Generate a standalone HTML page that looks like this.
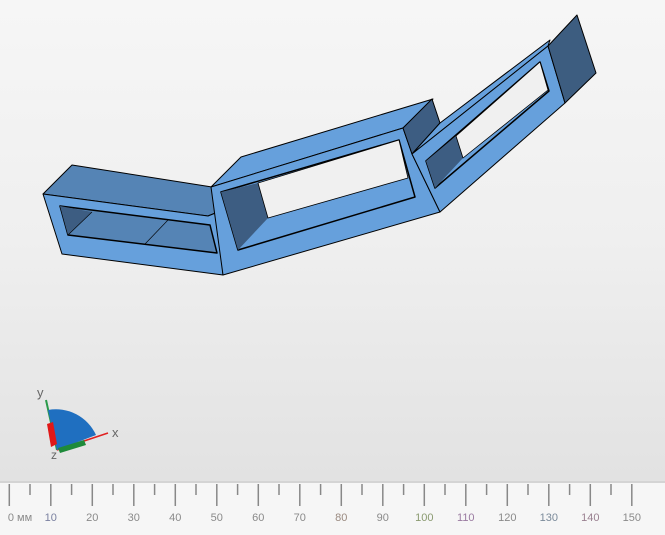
<!DOCTYPE html>
<html><head><style>
html,body{margin:0;padding:0;width:665px;height:533px;overflow:hidden;font-family:"Liberation Sans",sans-serif;}
#v{position:absolute;left:0;top:0;width:665px;height:481px;background:linear-gradient(#f6f6f6 0%,#efefef 50%,#e2e2e2 100%);}
#r{position:absolute;left:0;top:481px;width:665px;height:52px;background:#f6f6f6;border-top:2px solid #d4d4d4;}
</style></head><body>
<div id="v"></div>
<div id="r"></div>
<svg width="665" height="533" style="position:absolute;left:0;top:0" stroke-linejoin="round">
<g stroke="#000" stroke-width="1">
<!-- segment 1 -->
<polygon points="43,194 72,165 212,187 218,212 208,216" fill="#5584b5"/>
<polygon points="43,194 208,216 218,212 223,275 62,254" fill="#66a0dc"/>
<polygon points="60,206 210,225 217,253 68,235" fill="#5584b5" stroke-width="1.5"/>
<polygon points="60,206 92,212 68,235" fill="#3d5d82" stroke="none"/>
<line x1="92" y1="212" x2="68" y2="235" stroke-width="0.6"/>
<line x1="168" y1="220" x2="145" y2="244" stroke-width="0.6"/>
<!-- segment 2 -->
<polygon points="211,187 241,157 433,99 403,128" fill="#66a0dc"/>
<polygon points="211,187 403,128 412,154 440,212 223,275" fill="#66a0dc"/>
<polygon points="221,192 399,140 415,197 238,250" fill="#66a0dc" stroke-width="1.5"/>
<polygon points="221,192 258,183 268,218 238,250" fill="#3d5d82" stroke="none"/>
<polygon points="258,183 399,140 408,178 268,218" fill="#f0f0f0" stroke-width="0.8"/>
<polygon points="403,128 432,99 440,123 412,154" fill="#3d5d82"/>
<!-- segment 3 -->
<polygon points="412,154 440,123 550,40 548,46" fill="#66a0dc"/>
<polygon points="412,154 548,46 565,103 440,212" fill="#66a0dc"/>
<polygon points="426,161 540,62 549,91 435,188" fill="#66a0dc" stroke-width="1.5"/>
<polygon points="426,161 456,136 463,158 435,188" fill="#3d5d82" stroke="none"/>
<polygon points="456,136 540,62 548,90 463,158" fill="#f0f0f0" stroke-width="0.8"/>
<polygon points="548,46 577,15 596,73 565,103" fill="#3d5d80"/>
</g>
<!-- axis indicator -->
<line x1="46" y1="400" x2="57" y2="450" stroke="#2a9a4a" stroke-width="2"/>
<line x1="57" y1="450" x2="108" y2="433" stroke="#e02020" stroke-width="1.5"/>
<path d="M57,450 L48,410 A44,44 0 0 1 96,435 Z" fill="#1f6fc0"/>
<polygon points="47,424 53,422 57,444 51,447" fill="#e01818"/>
<polygon points="58,448 84,440 86,445 60,453" fill="#1e8a3a"/>
<text x="37" y="397" font-size="13" fill="#666">y</text>
<text x="112" y="437" font-size="13" fill="#666">x</text>
<text x="51" y="459" font-size="12" fill="#666">z</text>
<!-- ruler -->
<g stroke="#888" stroke-width="1.5">
<line x1="9.3" y1="484" x2="9.3" y2="506"/><line x1="30" y1="484" x2="30" y2="495"/>
<line x1="50.8" y1="484" x2="50.8" y2="506"/><line x1="71.6" y1="484" x2="71.6" y2="495"/>
<line x1="92.3" y1="484" x2="92.3" y2="506"/><line x1="113" y1="484" x2="113" y2="495"/>
<line x1="133.8" y1="484" x2="133.8" y2="506"/><line x1="154.6" y1="484" x2="154.6" y2="495"/>
<line x1="175.3" y1="484" x2="175.3" y2="506"/><line x1="196" y1="484" x2="196" y2="495"/>
<line x1="216.8" y1="484" x2="216.8" y2="506"/><line x1="237.6" y1="484" x2="237.6" y2="495"/>
<line x1="258.3" y1="484" x2="258.3" y2="506"/><line x1="279" y1="484" x2="279" y2="495"/>
<line x1="299.8" y1="484" x2="299.8" y2="506"/><line x1="320.6" y1="484" x2="320.6" y2="495"/>
<line x1="341.3" y1="484" x2="341.3" y2="506"/><line x1="362" y1="484" x2="362" y2="495"/>
<line x1="382.8" y1="484" x2="382.8" y2="506"/><line x1="403.6" y1="484" x2="403.6" y2="495"/>
<line x1="424.3" y1="484" x2="424.3" y2="506"/><line x1="445" y1="484" x2="445" y2="495"/>
<line x1="465.8" y1="484" x2="465.8" y2="506"/><line x1="486.6" y1="484" x2="486.6" y2="495"/>
<line x1="507.3" y1="484" x2="507.3" y2="506"/><line x1="528" y1="484" x2="528" y2="495"/>
<line x1="548.8" y1="484" x2="548.8" y2="506"/><line x1="569.6" y1="484" x2="569.6" y2="495"/>
<line x1="590.3" y1="484" x2="590.3" y2="506"/><line x1="611" y1="484" x2="611" y2="495"/>
<line x1="631.8" y1="484" x2="631.8" y2="506"/>
</g>
<g font-size="11" fill="#8a8a8a" text-anchor="middle">
<text x="20" y="521">0 мм</text><text x="50.8" y="521" fill="#7a80a0">10</text>
<text x="92.3" y="521">20</text><text x="133.8" y="521">30</text>
<text x="175.3" y="521">40</text><text x="216.8" y="521">50</text>
<text x="258.3" y="521">60</text><text x="299.8" y="521">70</text>
<text x="341.3" y="521" fill="#9a8a80">80</text><text x="382.8" y="521">90</text>
<text x="424.3" y="521" fill="#8a9a70">100</text><text x="465.8" y="521" fill="#9a7aa0">110</text>
<text x="507.3" y="521">120</text><text x="548.8" y="521" fill="#7a8a9a">130</text>
<text x="590.3" y="521" fill="#9a8090">140</text><text x="631.8" y="521">150</text>
</g>
</svg>
</body></html>
